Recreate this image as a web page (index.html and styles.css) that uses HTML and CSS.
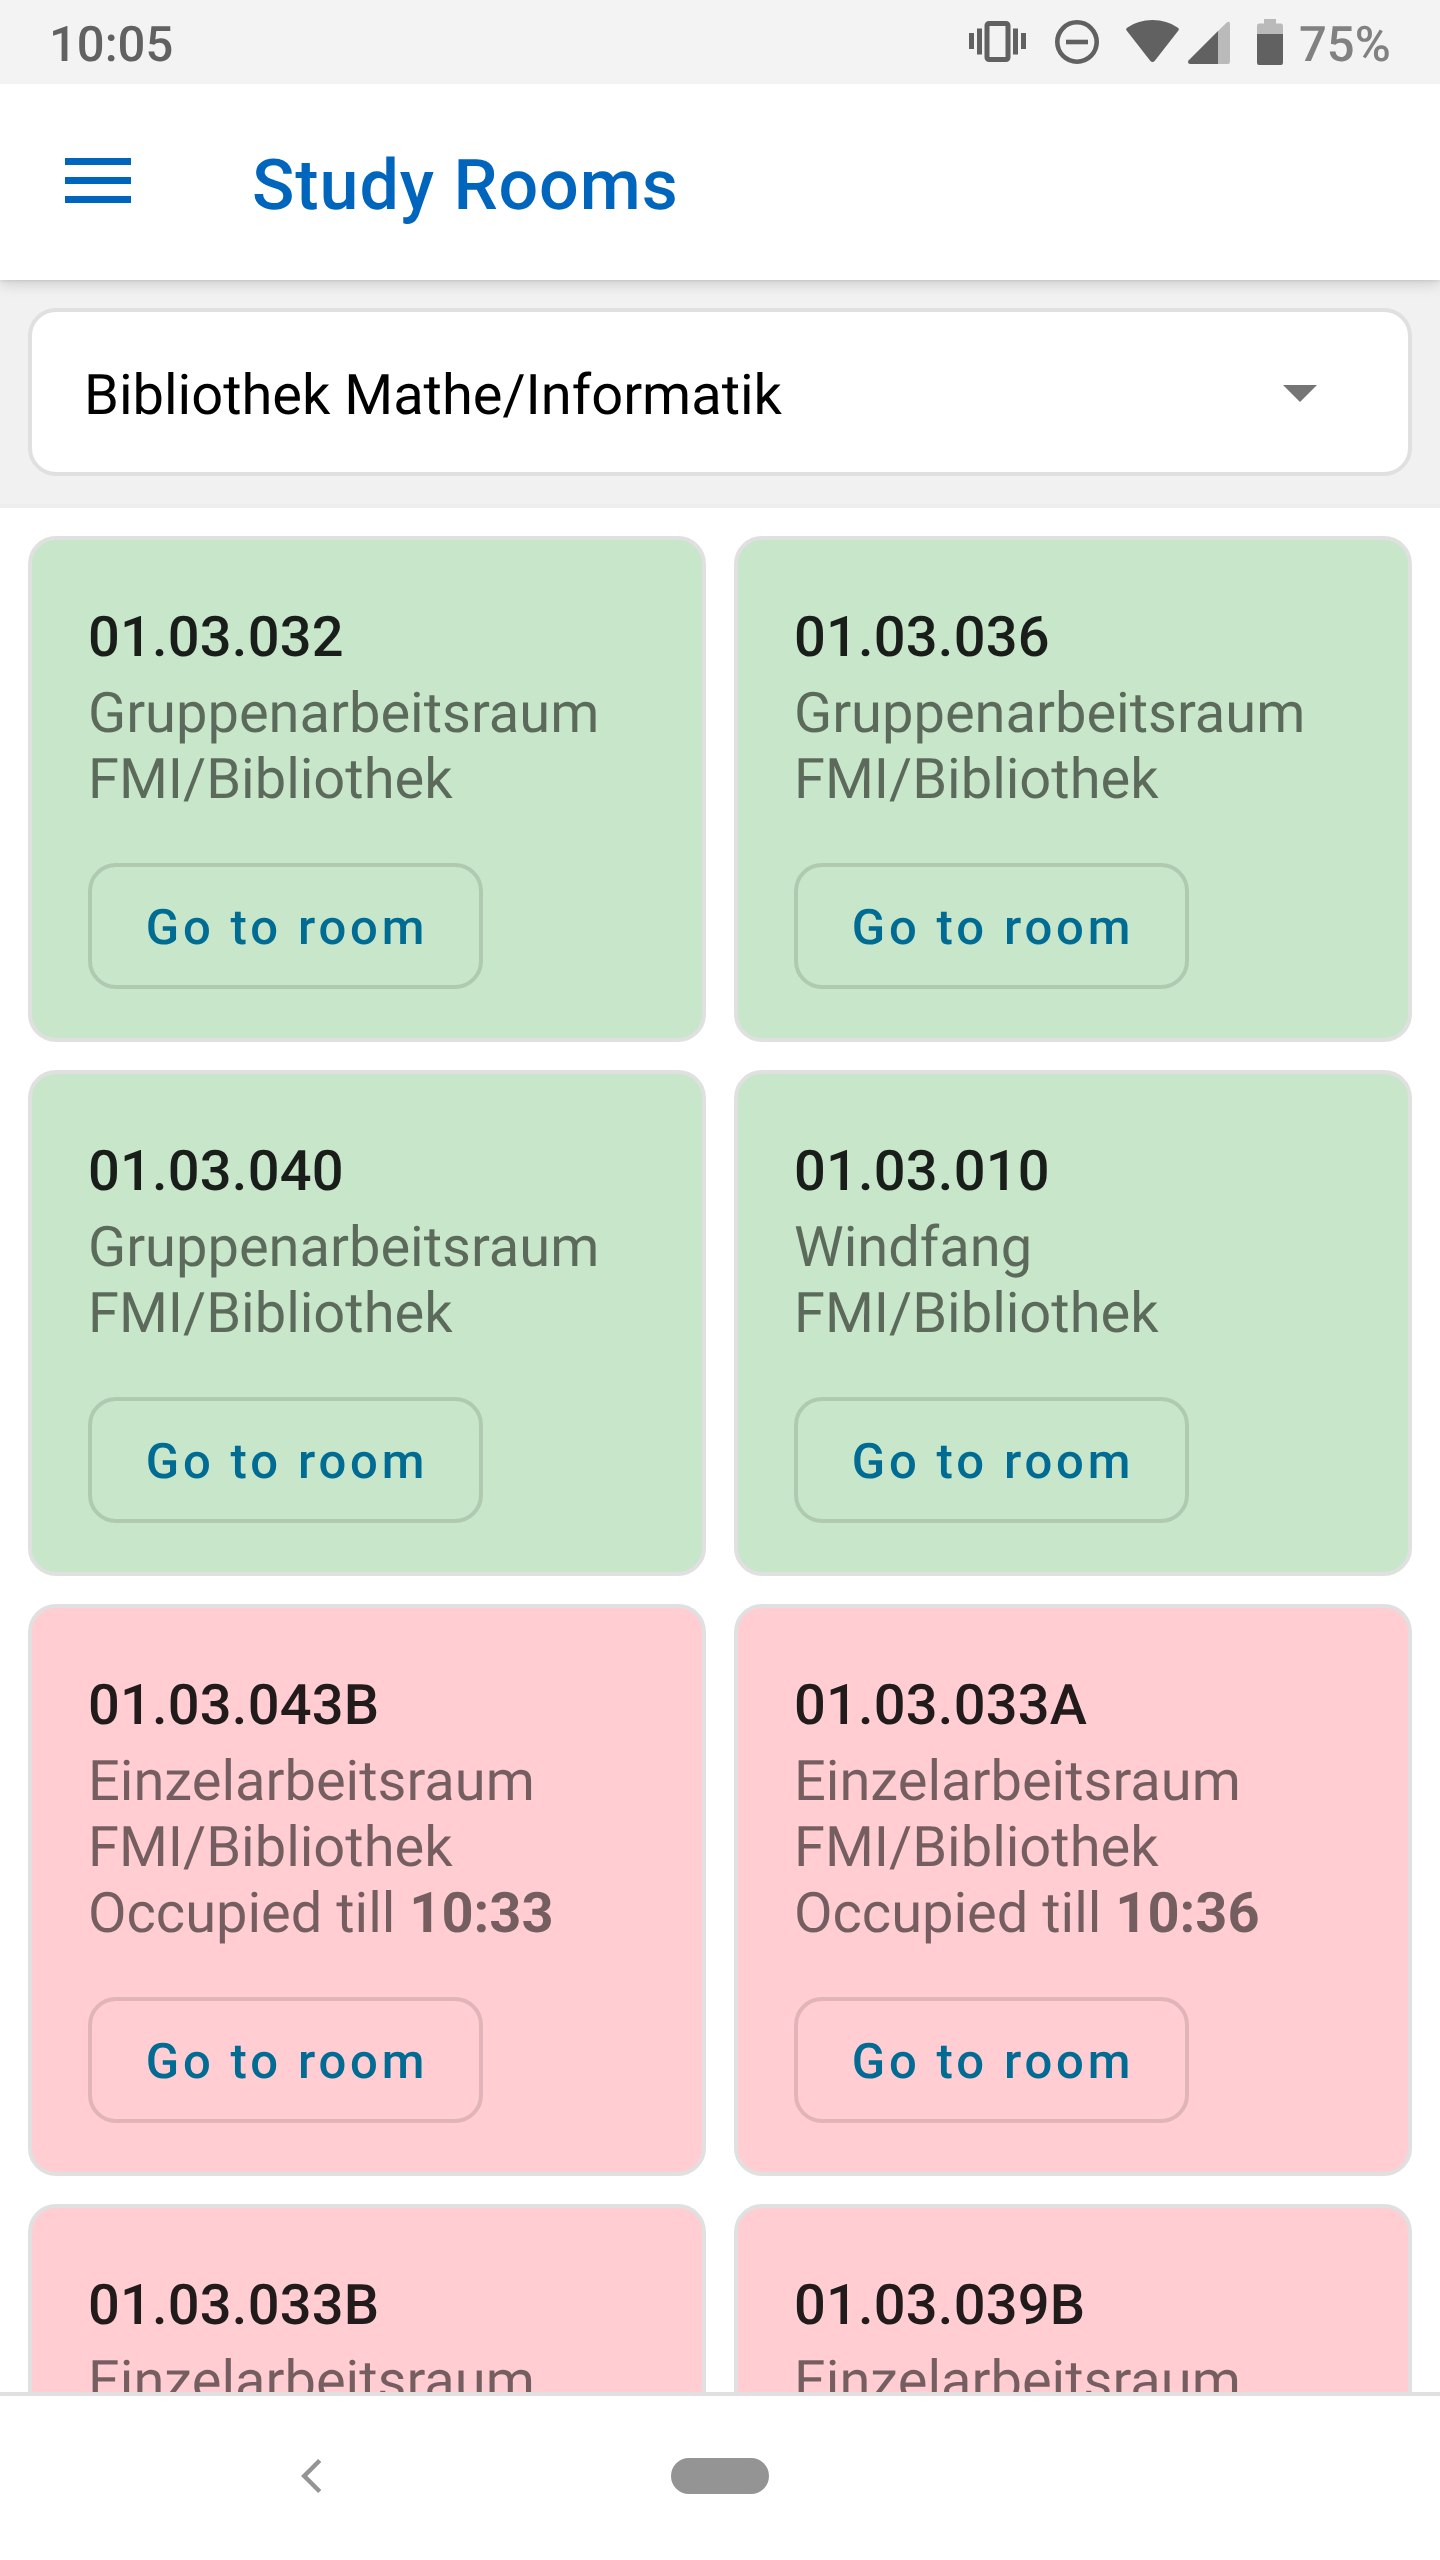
FILE: index.html
```html
<!DOCTYPE html>
<html lang="en">
<head>
<meta charset="utf-8">
<title>Study Rooms</title>
<link rel="stylesheet" href="styles.css">
</head>
<body>
<div class="screen">
  <div class="status">
    <span class="clock">10:05</span>
    <svg class="status-icons" width="330" height="84" viewBox="0 0 330 84" fill="#616161">
      <path d="M0 33h5v16H0zM8 28.500h5v26H8zM44 28.500h5v26h-5zM52 33h5v16h-5z"/>
      <rect x="18" y="23.500" width="21" height="36" rx="2" fill="none" stroke="#616161" stroke-width="5"/>
      <circle cx="108" cy="42" r="19.700" fill="none" stroke="#616161" stroke-width="4.600"/>
      <path d="M97 39.700h22v4.600H97z"/>
      <path d="M158 31Q156 29 158.500 27.500Q169 20 183.500 20T208.500 27.500Q211 29 209 31L186 60.500Q183.500 63.500 181 60.500z"/>
      <path fill="#bababa" d="M249 31L257 23.200Q261 20 261 24V61.500Q261 64 259 64H249z"/>
      <path d="M249 31V64H221Q218 63.500 219.500 60.500z"/>
      <path fill="#bababa" d="M288 34V26Q288 23.500 290 23.500H295V19H307V23.500H312Q314 23.500 314 26V34z"/>
      <path d="M288 34H314V62.500Q314 65 312 65H290Q288 65 288 62.500z"/>
    </svg>
    <span class="battery">75%</span>
  </div>
  <header class="toolbar">
    <svg class="menu" width="66" height="48" viewBox="0 0 66 48" fill="#0065bd"><path d="M0 0h66v7H0zM0 19h66v7H0zM0 38h66v7H0z"/></svg>
    <h1 class="title">Study Rooms</h1>
  </header>
  <div class="filter">
    <div class="select">
      <span>Bibliothek Mathe/Informatik</span>
      <svg class="caret" width="34" height="18" viewBox="0 0 34 18" fill="#757575"><path d="M0 0h34L17 17z"/></svg>
    </div>
  </div>
  <main class="rooms">
    <section class="card free"><h2>01.03.032</h2><p>Gruppenarbeitsraum<br>FMI/Bibliothek</p><button class="go">Go to room</button></section>
    <section class="card free"><h2>01.03.036</h2><p>Gruppenarbeitsraum<br>FMI/Bibliothek</p><button class="go">Go to room</button></section>
    <section class="card free"><h2>01.03.040</h2><p>Gruppenarbeitsraum<br>FMI/Bibliothek</p><button class="go">Go to room</button></section>
    <section class="card free"><h2>01.03.010</h2><p>Windfang<br>FMI/Bibliothek</p><button class="go">Go to room</button></section>
    <section class="card busy"><h2>01.03.043B</h2><p>Einzelarbeitsraum<br>FMI/Bibliothek<br>Occupied till <b>10:33</b></p><button class="go">Go to room</button></section>
    <section class="card busy"><h2>01.03.033A</h2><p>Einzelarbeitsraum<br>FMI/Bibliothek<br>Occupied till <b>10:36</b></p><button class="go">Go to room</button></section>
    <section class="card busy"><h2>01.03.033B</h2><p>Einzelarbeitsraum</p></section>
    <section class="card busy"><h2>01.03.039B</h2><p>Einzelarbeitsraum</p></section>
  </main>
  <nav class="navbar">
    <svg class="back" width="22" height="36" viewBox="0 0 22 36" fill="none" stroke="#949494" stroke-width="4.500"><path d="M19.700 2.500L4.200 18L19.700 33.500"/></svg>
    <span class="home"></span>
  </nav>
</div>
</body>
</html>
```
FILE: styles.css
```css
* { box-sizing: border-box; }
body { margin: 0; background: #fff; font-family: Roboto, sans-serif; text-rendering: geometricPrecision; }
.screen { width: 1440px; height: 2560px; overflow: hidden; display: flex; flex-direction: column; }
.status { flex: none; height: 84px; background: #f3f3f3; display: flex; align-items: center; padding-left: 49px; font-size: 49px; font-weight: 500; line-height: 84px; color: #616161; }
.status-icons { margin-left: auto; }
.battery { width: 141px; color: #818181; }
.clock, .battery { padding-top: 5px; }
.toolbar { flex: none; height: 196px; display: flex; align-items: center; padding-left: 65px; background: #fff; position: relative; z-index: 1; box-shadow: 0 3px 14px rgba(0, 0, 0, .17), 0 1px 3px rgba(0, 0, 0, .08); clip-path: inset(0 0 -40px 0); }
.menu { flex: none; }
.title { margin: 8px 0 0 121px; font-size: 70px; font-weight: 500; line-height: 82px; letter-spacing: .95px; color: #0065bd; }
.filter { flex: none; height: 228px; padding: 28px; background: #f1f1f1; border-bottom: 4px solid #eee; }
.select { height: 168px; border: 4px solid #e0e0e0; border-radius: 28px; background: #fff; display: flex; align-items: center; justify-content: space-between; padding: 0 91px 0 52px; font-size: 56px; color: #000; }
.select span { padding-top: 6px; }
.caret { margin-top: 4px; }
.rooms { flex: 1; min-height: 0; overflow: hidden; padding: 28px; display: grid; grid-template-columns: 1fr 1fr; grid-template-rows: 506px 506px 572px 572px; gap: 28px; }
.card { border: 4px solid #e0e0e0; border-radius: 28px; padding: 64px 56px 0; }
.free { background: #c8e6c9; }
.busy { background: #ffcdd2; }
.card h2 { margin: 0; font-size: 56px; font-weight: 500; line-height: 66px; letter-spacing: .2px; color: rgba(0, 0, 0, .87); }
.card p { margin: 10px 0 51px; font-size: 56px; line-height: 66px; color: rgba(0, 0, 0, .54); }
.go { display: block; width: 395px; height: 126px; margin: 0; padding: 4px 0 0 3px; border: 4px solid rgba(0, 0, 0, .12); border-radius: 28px; background: none; font: 500 49px/114px Roboto, sans-serif; letter-spacing: 3.85px; color: #006c94; text-rendering: inherit; }
.navbar { flex: none; height: 168px; border-top: 4px solid #e0e0e0; background: #fff; display: flex; align-items: center; padding: 0 0 4px 300px; }
.home { width: 98px; height: 36px; margin-left: 349px; border-radius: 18px; background: #949494; }
```
